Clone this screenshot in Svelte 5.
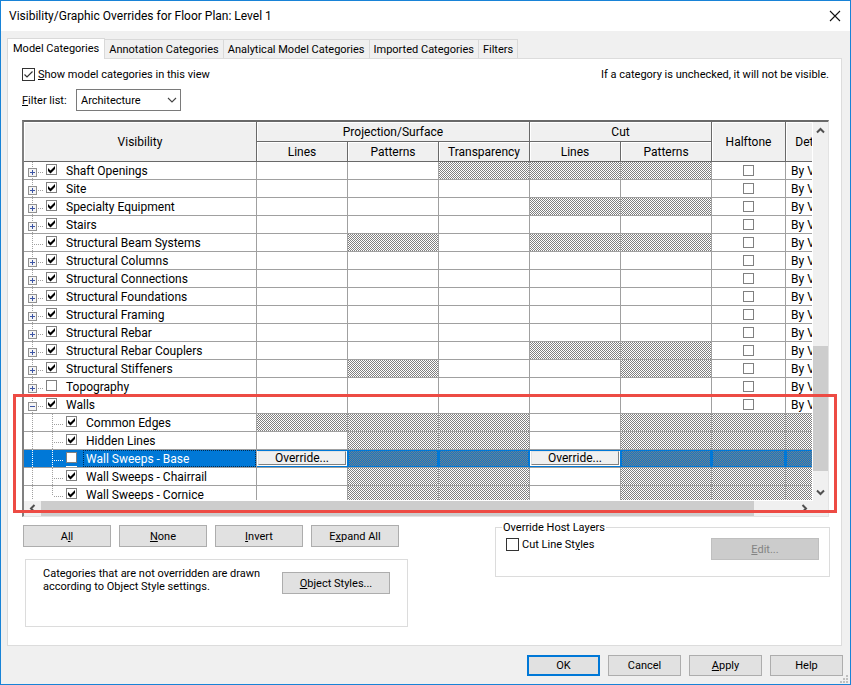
<script>
  const tabs = ['Annotation Categories', 'Analytical Model Categories', 'Imported Categories', 'Filters'];

  // hatch: one flag per column after Visibility (L P T | L P | halftone, detail)
  const rows = [
    { name: 'Shaft Openings', on: true, node: 'plus', hatch: '0011100' },
    { name: 'Site', on: true, node: 'plus', hatch: '0000000' },
    { name: 'Specialty Equipment', on: true, node: 'plus', hatch: '0001100' },
    { name: 'Stairs', on: true, node: 'plus', hatch: '0000000' },
    { name: 'Structural Beam Systems', on: true, node: 'leaf', hatch: '0101100' },
    { name: 'Structural Columns', on: true, node: 'plus', hatch: '0000000' },
    { name: 'Structural Connections', on: true, node: 'plus', hatch: '0000000' },
    { name: 'Structural Foundations', on: true, node: 'plus', hatch: '0000000' },
    { name: 'Structural Framing', on: true, node: 'plus', hatch: '0000000' },
    { name: 'Structural Rebar', on: true, node: 'plus', hatch: '0000000' },
    { name: 'Structural Rebar Couplers', on: true, node: 'plus', hatch: '0001100' },
    { name: 'Structural Stiffeners', on: true, node: 'plus', hatch: '0100100' },
    { name: 'Topography', on: false, node: 'plus', hatch: '0000000' },
    { name: 'Walls', on: true, node: 'minus', hatch: '0000000' },
    { name: 'Common Edges', on: true, node: 'child', hatch: '1110111' },
    { name: 'Hidden Lines', on: true, node: 'child', hatch: '0110111' },
    { name: 'Wall Sweeps - Base', on: false, node: 'child', hatch: '0110111', selected: true },
    { name: 'Wall Sweeps - Chairrail', on: true, node: 'child', hatch: '0110111' },
    { name: 'Wall Sweeps - Cornice', on: true, node: 'child', last: true, hatch: '0110111' }
  ];
</script>

<main class="dialog">
  <header class="titlebar">
    <h1>Visibility/Graphic Overrides for Floor Plan: Level 1</h1>
    <button class="close" aria-label="Close">
      <svg width="12" height="12" viewBox="0 0 12 12"><path d="M1 1L11 11M11 1L1 11" stroke="#111" stroke-width="1.1" fill="none" /></svg>
    </button>
  </header>

  <div class="tabs" role="tablist">
    <button class="tab active" role="tab" aria-selected="true">Model Categories</button>
    {#each tabs as tab}
      <button class="tab" role="tab" aria-selected="false">{tab}</button>
    {/each}
  </div>

  <section class="panel">
    <div class="line">
      <label class="check"><input class="box" type="checkbox" checked /><span><u>S</u>how model categories in this view</span></label>
      <span>If a category is unchecked, it will not be visible.</span>
    </div>
    <div class="filter">
      <label for="filter"><u>F</u>ilter list:</label>
      <div class="combo">
        <select id="filter"><option>Architecture</option></select>
        <svg width="10" height="6" viewBox="0 0 10 6"><path d="M1 1L5 5L9 1" stroke="#444" stroke-width="1.1" fill="none" /></svg>
      </div>
    </div>

    <div class="frame">
      <div class="view">
        <table>
          <colgroup>
            <col class="c-vis" />
            <col class="c-cell" span="5" />
            <col class="c-half" />
            <col />
          </colgroup>
          <thead>
            <tr>
              <th rowspan="2">Visibility</th>
              <th colspan="3">Projection/Surface</th>
              <th colspan="2">Cut</th>
              <th rowspan="2">Halftone</th>
              <th rowspan="2">Detail Level</th>
            </tr>
            <tr>
              <th>Lines</th>
              <th>Patterns</th>
              <th>Transparency</th>
              <th>Lines</th>
              <th>Patterns</th>
            </tr>
          </thead>
          <tbody>
            {#each rows as row}
              <tr class:selected={row.selected}>
                <td class="name">
                  <div class="tree">
                    {#if row.node === 'child'}
                      <svg width="42" height="18" viewBox="0 0 42 18" shape-rendering="crispEdges">
                        <path class="dots" d="M8.5 0V18M28.5 0V{row.last ? 10 : 18}M30 10.5H39" />
                      </svg>
                    {:else}
                      <svg width="22" height="18" viewBox="0 0 22 18" shape-rendering="crispEdges">
                        <path class="dots" d="M8.5 0V18M10 10.5H19" />
                        {#if row.node !== 'leaf'}
                          <rect x="4.5" y="6.5" width="8" height="8" fill="#f4f4f4" stroke="#919191" />
                          <path d={row.node === 'plus' ? 'M6 10.5H11M8.5 8V13' : 'M6 10.5H11'} stroke="#3c55a5" />
                        {/if}
                      </svg>
                    {/if}
                    <label><span class="tick"><input class="small" type="checkbox" checked={row.on} /></span><span class="text">{row.name}</span></label>
                  </div>
                </td>
                {#each row.hatch as h, i}
                  {#if h === '1'}
                    <td class="hatch"></td>
                  {:else if row.selected}
                    <td class="edit"><button>Override...</button></td>
                  {:else if i === 5}
                    <td class="half"><input class="small" type="checkbox" aria-label="Halftone {row.name}" /></td>
                  {:else if i === 6}
                    <td class="level">By View</td>
                  {:else}
                    <td></td>
                  {/if}
                {/each}
              </tr>
            {/each}
          </tbody>
        </table>
      </div>
      <div class="vbar">
        <button aria-label="Scroll up"><svg width="9" height="7" viewBox="0 0 9 7"><path d="M1 5.5L4.5 2L8 5.5" /></svg></button>
        <div class="vbefore"></div>
        <div class="vthumb"></div>
        <div class="vafter"></div>
        <button aria-label="Scroll down"><svg width="9" height="7" viewBox="0 0 9 7"><path d="M1 1.5L4.5 5L8 1.5" /></svg></button>
      </div>
      <div class="hbar">
        <button aria-label="Scroll left"><svg width="7" height="9" viewBox="0 0 7 9"><path d="M5.5 1L2 4.5L5.5 8" /></svg></button>
        <div class="hthumb"></div>
        <div class="hafter"></div>
        <button aria-label="Scroll right"><svg width="7" height="9" viewBox="0 0 7 9"><path d="M1.5 1L5 4.5L1.5 8" /></svg></button>
      </div>
      <div class="callout"></div>
    </div>

    <div class="lower">
      <div class="left">
        <div class="actions">
          <button class="btn">A<u>l</u>l</button>
          <button class="btn"><u>N</u>one</button>
          <button class="btn"><u>I</u>nvert</button>
          <button class="btn">E<u>x</u>pand All</button>
        </div>
        <div class="note">
          <p>Categories that are not overridden are drawn according to Object Style settings.</p>
          <button class="btn wide"><u>O</u>bject Styles...</button>
        </div>
      </div>
      <fieldset>
        <legend>Override Host Layers</legend>
        <label class="check"><input class="box" type="checkbox" /><span>Cut Line St<u>y</u>les</span></label>
        <button class="btn wide" disabled><u>E</u>dit...</button>
      </fieldset>
    </div>
  </section>

  <footer>
    <button class="btn ok">OK</button>
    <button class="btn">Cancel</button>
    <button class="btn"><u>A</u>pply</button>
    <button class="btn">Help</button>
  </footer>
  <svg class="grip" width="8" height="8" viewBox="0 0 8 8" shape-rendering="crispEdges">
    <path d="M6 0h2v2h-2zM3 3h2v2h-2zM6 3h2v2h-2zM0 6h2v2h-2zM3 6h2v2h-2zM6 6h2v2h-2z" fill="#bfbfbf" />
  </svg>
</main>

<style>
  :global(body) {
    margin: 0;
  }
  .dialog,
  .dialog * {
    box-sizing: border-box;
  }
  .dialog {
    position: relative;
    display: flex;
    flex-direction: column;
    min-height: 100vh;
    border: 1px solid #1883d7;
    background: #f0f0f0;
    color: #000;
    font: 11px/13px Roboto, 'Liberation Sans', sans-serif;
  }
  button,
  select {
    margin: 0;
    padding: 0;
    font: inherit;
    color: inherit;
  }
  u {
    text-underline-offset: 1px;
    text-decoration-thickness: 1px;
  }
  .titlebar {
    display: flex;
    align-items: center;
    justify-content: space-between;
    height: 30px;
    padding: 0 9px 0 8px;
    background: #fff;
  }
  h1 {
    margin: 0;
    font-size: 12px;
    line-height: 16px;
    font-weight: 400;
  }
  .close {
    display: flex;
    border: 0;
    background: none;
  }
  .tabs {
    display: flex;
    align-items: flex-end;
    margin: 7px 8px 0 6px;
  }
  .tab {
    height: 19px;
    padding: 0 4px;
    border: 1px solid #d9d9d9;
    border-width: 1px 1px 0 0;
    background: #f0f0f0;
    white-space: nowrap;
  }
  .tab.active {
    z-index: 1;
    height: 21px;
    margin-bottom: -1px;
    padding: 0 5px 2px;
    border-left-width: 1px;
    background: #fff;
  }
  .panel {
    flex: 1;
    margin: 0 8px 0 6px;
    padding: 9px 12px 18px 14px;
    border: 1px solid #dcdcdc;
    background: #fff;
  }
  .line {
    display: flex;
    justify-content: space-between;
  }
  .check {
    display: flex;
    align-items: center;
    gap: 3px;
  }
  .filter {
    display: flex;
    align-items: center;
    margin-top: 8px;
  }
  .filter label {
    width: 54px;
  }
  .combo {
    display: flex;
    align-items: center;
    position: relative;
  }
  .combo svg {
    position: absolute;
    right: 4px;
    pointer-events: none;
  }
  select {
    appearance: none;
    width: 105px;
    height: 22px;
    padding: 0 4px;
    border: 1px solid #7a7a7a;
    border-radius: 0;
    background: #fff;
  }
  input {
    appearance: none;
    flex: none;
    display: block;
    margin: 0;
    background: #fff center / 100% 100% no-repeat;
  }
  .box {
    width: 13px;
    height: 13px;
    border: 1px solid #333;
  }
  .box:checked {
    background-image: url("data:image/svg+xml,%3Csvg xmlns='http://www.w3.org/2000/svg' viewBox='0 0 11 11'%3E%3Cpath d='M1.5 5.5L4 8L9.5 2.5' fill='none' stroke='%23333' stroke-width='1.2'/%3E%3C/svg%3E");
  }
  .small {
    width: 11px;
    height: 11px;
    border: 1px solid #808080;
  }
  .small:checked {
    background-image: url("data:image/svg+xml,%3Csvg xmlns='http://www.w3.org/2000/svg' viewBox='0 0 9 9'%3E%3Cpath d='M1 3L3.5 5.5L8 1V4L3.5 8.5L1 6Z'/%3E%3C/svg%3E");
  }

  .frame {
    position: relative;
    display: grid;
    grid-template-columns: 1fr 15px;
    margin-top: 9px;
    border: 1px solid #e3e3e3;
    border-top: 2px solid #696969;
    border-left: 2px solid #808080;
    background: #fff;
  }
  .view {
    min-width: 0;
    height: 378px;
    margin-right: 1px;
    margin-bottom: 1px;
    overflow: hidden;
  }
  table {
    width: 100%;
    min-width: 843px;
    table-layout: fixed;
    border-spacing: 0;
    font-size: 12px;
    line-height: 16px;
  }
  .c-vis {
    width: 233px;
  }
  .c-cell {
    width: 91px;
  }
  .c-half {
    width: 74px;
  }
  th {
    height: 20px;
    padding: 0;
    border-right: 1px solid #696969;
    border-bottom: 1px solid #696969;
    background: #f0f0f0;
    box-shadow: inset 1px 1px #fff;
    font-weight: 400;
  }
  td {
    height: 18px;
    padding: 0;
    border-right: 1px solid #a0a0a0;
    border-bottom: 1px solid #a0a0a0;
    line-height: 16px;
  }
  .hatch {
    background: url("data:image/svg+xml,%3Csvg xmlns='http://www.w3.org/2000/svg' width='2' height='2' shape-rendering='crispEdges'%3E%3Cpath d='M0 0h1v1h1v1h-1v-1h-1z' fill='%23808080'/%3E%3C/svg%3E") 0 0 / 2px 2px fixed #fff;
  }
  .tree {
    display: flex;
    height: 17px;
  }
  .tree svg {
    flex: none;
    margin-bottom: -1px;
  }
  .dots {
    fill: none;
    stroke: #a0a0a0;
    stroke-dasharray: 1 1;
  }
  .tree label {
    flex: 1;
    display: flex;
  }
  .tick {
    padding-top: 2px;
    margin-right: 6px;
  }
  .text {
    flex: 1;
    padding: 1px 0 0 3px;
    white-space: nowrap;
  }
  .half input {
    margin: 0 auto;
  }
  .level {
    padding: 1px 0 0 5px;
    white-space: nowrap;
  }
  .selected .name {
    background: #0078d7;
    color: #fff;
  }
  .selected .dots {
    stroke: #fff;
  }
  .selected .text {
    outline: 1px dotted #002a50;
    outline-offset: -1px;
  }
  .selected .tick {
    border-bottom: 1px solid #fff;
  }
  .selected .hatch {
    border-right-color: #0078d7;
    background-color: #0078d7;
    box-shadow: inset 0 0 0 1px #0078d7;
  }
  .edit {
    vertical-align: top;
    border-right-color: #0078d7;
    box-shadow: inset 0 1px #0078d7, inset 0 -1px #0078d7;
  }
  .edit button {
    display: block;
    width: calc(100% - 2px);
    height: 14px;
    margin: 1px 1px 0;
    border: 1px solid;
    border-color: #e3e3e3 #808080 #808080 #e3e3e3;
    background: #f0f0f0;
    line-height: 12px;
  }
  .vbar,
  .hbar {
    display: flex;
    background: #f0f0f0;
  }
  .vbar {
    flex-direction: column;
  }
  .hbar {
    grid-column: 1 / 3;
    height: 15px;
    padding-right: 15px;
  }
  .vbar button,
  .hbar button {
    flex: none;
    display: flex;
    align-items: center;
    justify-content: center;
    width: 15px;
    height: 17px;
    border: 0;
    background: none;
  }
  .hbar button {
    width: 17px;
    height: 15px;
  }
  .frame button path {
    fill: none;
    stroke: #505050;
    stroke-width: 2;
  }
  .vbefore {
    flex: 207;
  }
  .vthumb {
    flex: 125;
    background: #cdcdcd;
  }
  .vafter {
    flex: 13;
  }
  .hthumb {
    flex: 713;
    background: #cdcdcd;
  }
  .hafter {
    flex: 42;
  }
  .callout {
    position: absolute;
    top: 272px;
    left: -11px;
    right: -9px;
    height: 119px;
    border: 3px solid #ed4b44;
    pointer-events: none;
  }

  .btn {
    height: 22px;
    border: 1px solid #adadad;
    background: #e1e1e1;
    width: 88px;
  }
  .btn.wide {
    width: 108px;
  }
  .btn:disabled {
    border-color: #bfbfbf;
    background: #ccc;
    color: #838383;
  }
  .lower {
    display: flex;
    justify-content: space-between;
    align-items: flex-start;
    margin-top: 8px;
  }
  .left {
    padding-left: 1px;
  }
  .actions {
    display: flex;
    gap: 8px;
  }
  .note {
    display: flex;
    align-items: flex-start;
    justify-content: space-between;
    width: 383px;
    min-height: 68px;
    margin: 12px 0 0 2px;
    padding: 7px 17px;
    border: 1px solid #dcdcdc;
  }
  .note p {
    width: 230px;
    margin: 0;
  }
  .note .btn {
    margin-top: 5px;
  }
  fieldset {
    display: flex;
    align-items: flex-start;
    justify-content: space-between;
    width: 335px;
    height: 56px;
    margin: -4px -1px 0 0;
    padding: 4px 10px 0;
    border: 1px solid #dcdcdc;
  }
  legend {
    margin-left: -4px;
    padding: 0 1px;
  }
  footer {
    display: flex;
    justify-content: flex-end;
    gap: 8px;
    padding: 9px 7px 8px;
  }
  footer .btn {
    width: 73px;
    height: 21px;
  }
  .ok {
    border: 2px solid #0078d7;
  }
  .grip {
    position: absolute;
    right: 2px;
    bottom: 1px;
  }
</style>
